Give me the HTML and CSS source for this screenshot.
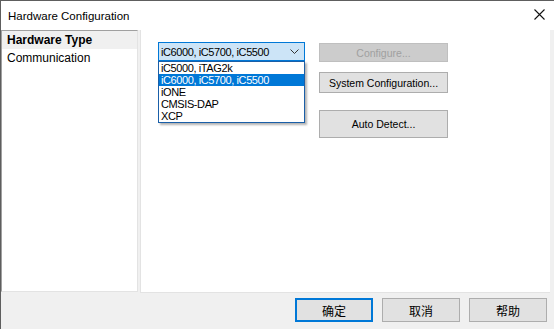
FILE: index.html
```html
<!DOCTYPE html>
<html lang="en">
<head>
    <meta charset="UTF-8">
    <title>Hardware Configuration</title>
    <link rel="stylesheet" href="styles.css">
</head>
<body>
    <div class="window">
        <div class="titlebar">
            <span class="title">Hardware Configuration</span>
            <svg class="close" width="11" height="11" viewBox="0 0 11 11">
                <path d="M0.5 0.5 L10.5 10.5 M10.5 0.5 L0.5 10.5" stroke="#111" stroke-width="1.1" fill="none"/>
            </svg>
        </div>

        <div class="main">
            <ul class="tree">
                <li class="tree-item selected">Hardware Type</li>
                <li class="tree-item">Communication</li>
            </ul>

            <div class="page">
                <div class="combo-wrap">
                    <div class="combo">
                        <span>iC6000, iC5700, iC5500</span>
                        <svg class="chevron" width="9" height="5" viewBox="0 0 9 5">
                            <path d="M0.5 0.5 L4.5 4.5 L8.5 0.5" stroke="#333" stroke-width="1" fill="none"/>
                        </svg>
                    </div>
                    <ul class="dropdown">
                        <li>iC5000, iTAG2k</li>
                        <li class="active">iC6000, iC5700, iC5500</li>
                        <li>iONE</li>
                        <li>CMSIS-DAP</li>
                        <li>XCP</li>
                    </ul>
                </div>

                <div class="actions">
                    <button class="btn btn-configure" disabled>Configure...</button>
                    <button class="btn btn-system">System Configuration...</button>
                    <button class="btn btn-detect">Auto Detect...</button>
                </div>
            </div>
        </div>

        <div class="footer">
            <button class="btn btn-footer default">确定</button>
            <button class="btn btn-footer">取消</button>
            <button class="btn btn-footer">帮助</button>
        </div>
    </div>
</body>
</html>
```

FILE: styles.css
```css
body {
    margin: 0;
    padding: 0;
    font-family: "Liberation Sans", Arial, sans-serif;
    color: #000;
}

.window {
    width: 554px;
    height: 329px;
    box-sizing: border-box;
    border-top: 1px solid #5e5e5e;
    border-left: 1px solid #5e5e5e;
    background-color: #f0f0f0;
    display: flex;
    flex-direction: column;
    overflow: hidden;
}

.titlebar {
    height: 29px;
    flex-shrink: 0;
    background-color: #fff;
    display: flex;
    align-items: center;
    justify-content: space-between;
    padding: 0 9px 0 7px;
}

.title {
    font-size: 11.5px;
}

.close {
    margin-top: -2px;
}

.main {
    height: 263px;
    display: flex;
}

.tree {
    list-style: none;
    margin: 0;
    padding: 0;
    width: 137px;
    box-sizing: border-box;
    background-color: #fff;
    border-top: 1px solid #a0a0a0;
    border-left: 1px solid #a0a0a0;
    border-right: 1px solid #e3e3e3;
    border-bottom: 1px solid #e3e3e3;
    height: 262px;
}

.tree-item {
    height: 18px;
    line-height: 18px;
    padding-left: 5px;
    font-size: 12px;
}

.tree-item.selected {
    background-color: #f0f0f0;
    font-weight: bold;
}

.page {
    flex: 1;
    margin: 0 4px 0 2px;
    background-color: #fff;
    border-left: 1px solid #e3e3e3;
    border-bottom: 1px solid #e3e3e3;
    display: flex;
    align-items: flex-start;
    padding: 12px 0 0 17px;
}

.combo-wrap {
    position: relative;
    width: 147px;
}

.combo {
    height: 19px;
    box-sizing: border-box;
    border: 1px solid #0078d7;
    background-color: #cce4f7;
    display: flex;
    align-items: center;
    justify-content: space-between;
    padding: 0 5px 0 2px;
    font-size: 11px;
    letter-spacing: -0.4px;
}

.dropdown {
    position: absolute;
    top: 100%;
    left: 0;
    width: 147px;
    box-sizing: border-box;
    list-style: none;
    margin: 0;
    padding: 0;
    background-color: #fff;
    border: 1px solid #1a5fa8;
    box-shadow: 2px 2px 2px rgba(0, 0, 0, 0.3);
    z-index: 10;
}

.dropdown li {
    height: 12px;
    line-height: 12px;
    padding-left: 2px;
    font-size: 11px;
    letter-spacing: -0.4px;
}

.dropdown li.active {
    background-color: #0078d7;
    color: #fff;
}

.actions {
    margin-left: 14px;
    width: 129px;
    display: flex;
    flex-direction: column;
    padding-top: 1px;
}

.btn {
    box-sizing: border-box;
    margin: 0;
    padding: 0;
    background-color: #e1e1e1;
    border: 1px solid #adadad;
    font-family: "Liberation Sans", Arial, sans-serif;
    font-size: 10.5px;
    color: #000;
}

.btn-configure {
    height: 19px;
    background-color: #cccccc;
    border-color: #bfbfbf;
    color: #a0a0a0;
}

.btn-system {
    height: 21px;
    margin-top: 10px;
}

.btn-detect {
    height: 28px;
    margin-top: 17px;
}

.footer {
    flex: 1;
    display: flex;
    justify-content: flex-end;
    align-items: flex-start;
    gap: 9px;
    padding: 5px 7px 0 0;
}

.btn-footer {
    width: 78px;
    height: 24px;
    font-family: "Liberation Sans", "Noto Sans CJK SC", sans-serif;
    font-size: 12px;
}

.btn-footer.default {
    border: 2px solid #0078d7;
}
```
